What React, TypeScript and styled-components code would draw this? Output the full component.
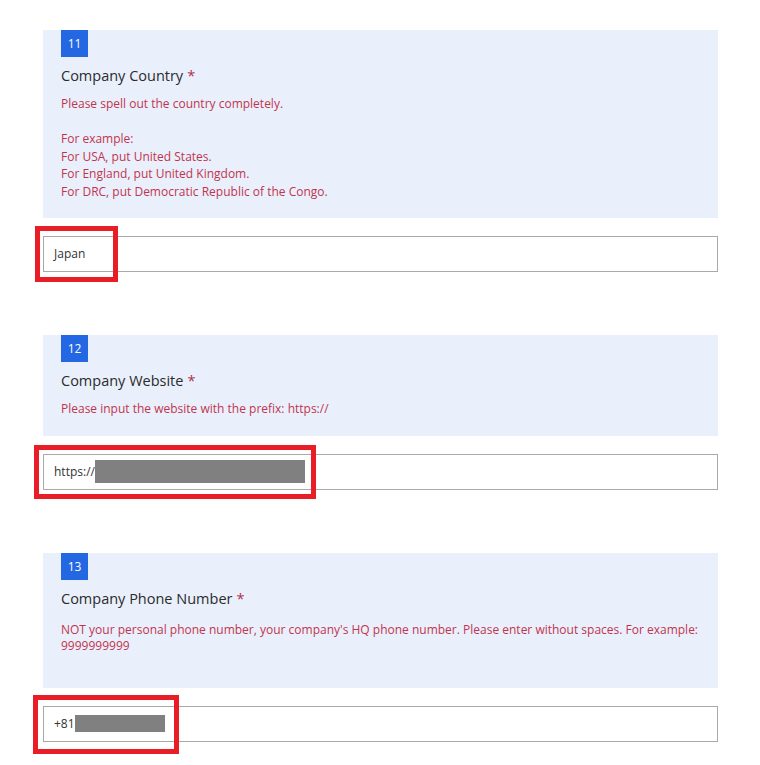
import React from "react";
import styled, { createGlobalStyle } from "styled-components";

const Global = createGlobalStyle`
  html, body { margin: 0; padding: 0; background: #ffffff; }
  body { font-family: "Open Sans", "Noto Sans", "Liberation Sans", sans-serif; }
`;

const Page = styled.div`
  width: 760px;
  height: 765px;
  overflow: hidden;
  box-sizing: border-box;
  padding: 30px 42px 0 43px;
  display: flex;
  flex-direction: column;
`;

const Question = styled.section<{ $gap: number }>`
  display: flex;
  flex-direction: column;
  margin-bottom: ${(p) => p.$gap}px;
`;

const Panel = styled.div<{ $padBottom: number }>`
  background: #e9f0fc;
  padding: 0 18px ${(p) => p.$padBottom}px 18px;
  display: flex;
  flex-direction: column;
  align-items: flex-start;
`;

const Badge = styled.div`
  width: 27px;
  height: 27px;
  background: #2467e2;
  color: #ffffff;
  font-size: 12px;
  display: flex;
  align-items: center;
  justify-content: center;
`;

const Title = styled.div`
  margin-top: 8px;
  font-size: 14.5px;
  line-height: 22px;
  color: #2b2b2b;
`;

const Star = styled.span`
  color: #b0304f;
  margin-left: 4px;
`;

const Desc = styled.div<{ $lh: number; $top: number }>`
  margin-top: ${(p) => p.$top}px;
  font-size: 12px;
  line-height: ${(p) => p.$lh}px;
  color: #c2344d;
`;

const Line = styled.div`
  min-height: 1em;
`;

const Field = styled.div`
  position: relative;
  margin-top: 18px;
  height: 36px;
  box-sizing: border-box;
  border: 1px solid #a9a9a9;
  background: #ffffff;
  display: flex;
  align-items: center;
  padding-left: 10px;
  font-size: 12px;
  color: #333333;
`;

const Redact = styled.span<{ $w: number; $h: number }>`
  display: inline-block;
  width: ${(p) => p.$w}px;
  height: ${(p) => p.$h}px;
  background: #808080;
`;

const Highlight = styled.div<{ $l: number; $t: number; $w: number; $h: number }>`
  position: absolute;
  left: ${(p) => p.$l}px;
  top: ${(p) => p.$t}px;
  width: ${(p) => p.$w}px;
  height: ${(p) => p.$h}px;
  box-sizing: border-box;
  border: 5px solid #e81d25;
  pointer-events: none;
`;

export default function App() {
  return (
    <>
      <Global />
      <Page>
        <Question $gap={63}>
          <Panel $padBottom={17}>
            <Badge>11</Badge>
            <Title>
              Company Country<Star>*</Star>
            </Title>
            <Desc $lh={17.6} $top={8}>
              <Line>Please spell out the country completely.</Line>
              <Line>&nbsp;</Line>
              <Line>For example:</Line>
              <Line>For USA, put United States.</Line>
              <Line>For England, put United Kingdom.</Line>
              <Line>For DRC, put Democratic Republic of the Congo.</Line>
            </Desc>
          </Panel>
          <Field>
            Japan
            <Highlight $l={-9} $t={-11} $w={83} $h={56} />
          </Field>
        </Question>

        <Question $gap={63}>
          <Panel $padBottom={18}>
            <Badge>12</Badge>
            <Title>
              Company Website<Star>*</Star>
            </Title>
            <Desc $lh={18} $top={8}>
              <Line>Please input the website with the prefix: https://</Line>
            </Desc>
          </Panel>
          <Field>
            https://
            <Redact $w={210} $h={23} />
            <Highlight $l={-10} $t={-10} $w={282} $h={54} />
          </Field>
        </Question>

        <Question $gap={0}>
          <Panel $padBottom={33}>
            <Badge>13</Badge>
            <Title>
              Company Phone Number<Star>*</Star>
            </Title>
            <Desc $lh={16.5} $top={12}>
              <Line>
                NOT your personal phone number, your company's HQ phone number. Please enter without spaces. For example:
              </Line>
              <Line>9999999999</Line>
            </Desc>
          </Panel>
          <Field>
            +81
            <Redact $w={90} $h={17} />
            <Highlight $l={-11} $t={-12} $w={146} $h={59} />
          </Field>
        </Question>
      </Page>
    </>
  );
}
